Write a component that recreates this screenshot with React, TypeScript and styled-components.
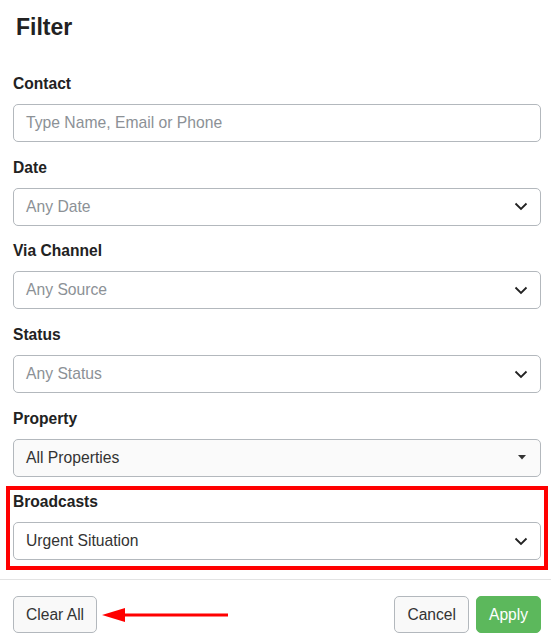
import React from "react";
import styled, { createGlobalStyle } from "styled-components";

const GlobalStyle = createGlobalStyle`
  html, body {
    margin: 0;
    padding: 0;
    background: #ffffff;
  }
  body {
    font-family: "Liberation Sans", Arial, sans-serif;
    color: #222;
  }
`;

const Panel = styled.div`
  width: 551px;
  height: 641px;
  background: #fff;
  display: flex;
  flex-direction: column;
  overflow: hidden;
`;

const Title = styled.h2`
  margin: 0;
  padding: 14px 16px 0;
  font-size: 23px;
  line-height: 26px;
  font-weight: 700;
  color: #222;
`;

const Body = styled.div`
  display: flex;
  flex-direction: column;
  gap: 15.7px;
  padding: 34px 10px 0 13px;
`;

const Group = styled.div`
  display: flex;
  flex-direction: column;
`;

const Highlight = styled.div`
  display: flex;
  flex-direction: column;
  margin: -6px -7px 0 -7px;
  padding: 2px 3px 6px 3px;
  border: 4px solid #ff0000;
`;

const Label = styled.label`
  font-size: 15.6px;
  line-height: 20px;
  font-weight: 700;
  color: #222;
  margin-bottom: 10px;
`;

const Field = styled.div<{ $shade?: boolean }>`
  box-sizing: border-box;
  height: 38px;
  display: flex;
  align-items: center;
  justify-content: space-between;
  padding: 0 12px;
  border: 1px solid #b3b8bd;
  border-radius: 5px;
  background: ${(p) => (p.$shade ? "#fafafa" : "#fff")};
`;

const Value = styled.span<{ $placeholder?: boolean }>`
  font-size: 15.7px;
  color: ${(p) => (p.$placeholder ? "#8c9196" : "#333")};
`;

const Divider = styled.hr`
  border: 0;
  border-top: 1px solid #e3e3e3;
  margin: 9px 0 0;
`;

const Footer = styled.div`
  display: flex;
  align-items: center;
  padding: 16px 10px 0 13px;
`;

const Right = styled.div`
  margin-left: auto;
  display: flex;
  gap: 7px;
`;

const Button = styled.button<{ $primary?: boolean }>`
  box-sizing: border-box;
  height: 37px;
  padding: 0 12px;
  font-family: inherit;
  font-size: 15.6px;
  border-radius: 5px;
  border: 1px solid ${(p) => (p.$primary ? "#5cb85c" : "#b3b8bd")};
  background: ${(p) => (p.$primary ? "#5cb85c" : "#f9f9f9")};
  color: ${(p) => (p.$primary ? "#fff" : "#333")};
`;

const ArrowWrap = styled.span`
  display: flex;
  margin-left: 5px;
`;

const Chevron = () => (
  <svg width="14" height="9" viewBox="0 0 14 9">
    <path d="M1.5 1.5 L7 7 L12.5 1.5" fill="none" stroke="#222" strokeWidth="1.8" />
  </svg>
);

const Caret = () => (
  <svg width="8" height="5" viewBox="0 0 8 5" style={{ marginRight: 2 }}>
    <path d="M0 0 L8 0 L4 4.5 Z" fill="#333" />
  </svg>
);

const Arrow = () => (
  <svg width="128" height="20" viewBox="0 0 128 20">
    <path d="M0 10 L23 3 L23 17 Z" fill="#ff0000" />
    <rect x="20" y="8.5" width="106" height="3" fill="#ff0000" />
  </svg>
);

export default function App() {
  return (
    <Panel>
      <GlobalStyle />
      <Title>Filter</Title>
      <Body>
        <Group>
          <Label>Contact</Label>
          <Field>
            <Value $placeholder>Type Name, Email or Phone</Value>
          </Field>
        </Group>
        <Group>
          <Label>Date</Label>
          <Field>
            <Value $placeholder>Any Date</Value>
            <Chevron />
          </Field>
        </Group>
        <Group>
          <Label>Via Channel</Label>
          <Field>
            <Value $placeholder>Any Source</Value>
            <Chevron />
          </Field>
        </Group>
        <Group>
          <Label>Status</Label>
          <Field>
            <Value $placeholder>Any Status</Value>
            <Chevron />
          </Field>
        </Group>
        <Group>
          <Label>Property</Label>
          <Field $shade>
            <Value>All Properties</Value>
            <Caret />
          </Field>
        </Group>
        <Highlight>
          <Label>Broadcasts</Label>
          <Field>
            <Value>Urgent Situation</Value>
            <Chevron />
          </Field>
        </Highlight>
      </Body>
      <Divider />
      <Footer>
        <Button>Clear All</Button>
        <ArrowWrap>
          <Arrow />
        </ArrowWrap>
        <Right>
          <Button>Cancel</Button>
          <Button $primary>Apply</Button>
        </Right>
      </Footer>
    </Panel>
  );
}
